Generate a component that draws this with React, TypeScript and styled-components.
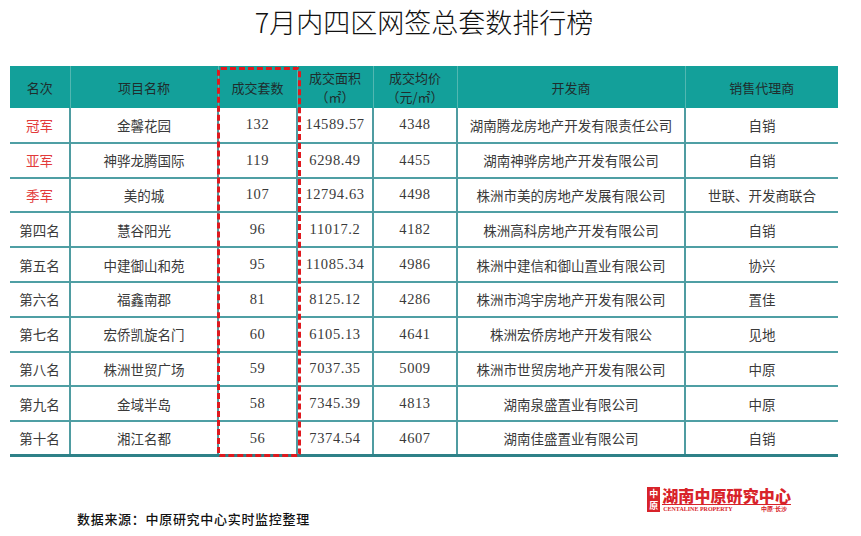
import styled, { createGlobalStyle } from "styled-components"

const GlobalStyle = createGlobalStyle`
  html, body {
    margin: 0;
    padding: 0;
    background: #ffffff;
  }
  body {
    font-family: "Noto Sans CJK SC", "Liberation Sans", sans-serif;
    color: #333333;
  }
`

const Page = styled.div`
  width: 861px;
  height: 536px;
  overflow: hidden;
`

const Sheet = styled.div`
  width: 828px;
  margin-left: 10px;
`

const Title = styled.h1`
  margin: 0;
  height: 66px;
  padding-top: 5px;
  box-sizing: border-box;
  text-align: center;
  font-size: 27px;
  line-height: 34px;
  font-weight: 300;
  color: #111111;
  font-family: "Noto Sans CJK SC", "Liberation Serif", serif;
`

const TableWrap = styled.div`
  position: relative;
`

const Table = styled.table`
  width: 828px;
  border-collapse: collapse;
  table-layout: fixed;
  border-bottom: 3px solid #2e8188;
`

const HeadCell = styled.th`
  height: 42px;
  padding: 0;
  background: #13a09a;
  color: #1f2d2d;
  font-weight: 400;
  font-size: 13px;
  line-height: 19px;
  text-align: center;
  border-left: 1px solid #52b7b1;

  &:first-child {
    border-left: none;
  }
`

const HeadLine = styled.div`
  white-space: nowrap;
`

const Row = styled.tr`
  height: 34.8px;
  border-top: 2px solid #4f9fa4;

  &:first-child {
    border-top: none;
  }
`

const Cell = styled.td<{ $red?: boolean; $num?: boolean }>`
  padding: 0;
  text-align: center;
  white-space: nowrap;
  font-size: ${(p) => (p.$num ? "14.5px" : "13.5px")};
  letter-spacing: ${(p) => (p.$num ? "0.6px" : "0")};
  font-family: ${(p) =>
    p.$num
      ? '"Liberation Serif", "Noto Sans CJK SC", serif'
      : '"Noto Sans CJK SC", "Liberation Sans", sans-serif'};
  color: ${(p) => (p.$red ? "#e23a3a" : "#3a3a3a")};
  border-left: 2px solid #4f9ca1;

  &:first-child {
    border-left: none;
  }
`

const DashedBox = styled.div`
  position: absolute;
  left: 207px;
  top: 1px;
  width: 84px;
  height: 390px;
  box-sizing: border-box;
  border: 3px dashed #e0191e;
  border-radius: 4px;
  pointer-events: none;
`

const Footer = styled.div`
  display: flex;
  align-items: flex-start;
`

const Note = styled.div`
  margin: 54px 0 0 77px;
  font-size: 13px;
  line-height: 16px;
  font-weight: 500;
  letter-spacing: 0.7px;
  color: #111111;
`

const Logo = styled.div`
  margin: 30px 70px 0 auto;
  display: flex;
  align-items: stretch;
  gap: 2px;
`

const LogoMark = styled.div`
  width: 13px;
  height: 25px;
  background: #d8232a;
  color: #ffffff;
  display: flex;
  flex-direction: column;
  align-items: center;
  justify-content: space-around;
  font-size: 9px;
  line-height: 10px;
  font-weight: 700;
`

const LogoText = styled.div`
  display: flex;
  flex-direction: column;
`

const LogoName = styled.div`
  font-size: 16px;
  line-height: 16px;
  font-weight: 900;
  color: #d8232a;
  letter-spacing: 0.1px;
  padding-bottom: 1px;
  border-bottom: 1px solid #d8232a;
`

const LogoSub = styled.div`
  display: flex;
  justify-content: space-between;
  padding: 1px 4px 0 1px;
  font-family: "Liberation Serif", "Noto Sans CJK SC", serif;
  font-size: 6px;
  line-height: 7px;
  font-weight: 700;
  color: #d8232a;
`

const headers = [
  { label: "名次", width: 60 },
  { label: "项目名称", width: 148 },
  { label: "成交套数", width: 79 },
  { label: "成交面积\n（㎡）", width: 76 },
  { label: "成交均价\n（元/㎡）", width: 84 },
  { label: "开发商", width: 228 },
  { label: "销售代理商", width: 153 },
]

const rows = [
  ["冠军", "金馨花园", "132", "14589.57", "4348", "湖南腾龙房地产开发有限责任公司", "自销"],
  ["亚军", "神骅龙腾国际", "119", "6298.49", "4455", "湖南神骅房地产开发有限公司", "自销"],
  ["季军", "美的城", "107", "12794.63", "4498", "株洲市美的房地产发展有限公司", "世联、开发商联合"],
  ["第四名", "慧谷阳光", "96", "11017.2", "4182", "株洲高科房地产开发有限公司", "自销"],
  ["第五名", "中建御山和苑", "95", "11085.34", "4986", "株洲中建信和御山置业有限公司", "协兴"],
  ["第六名", "福鑫南郡", "81", "8125.12", "4286", "株洲市鸿宇房地产开发有限公司", "置佳"],
  ["第七名", "宏侨凯旋名门", "60", "6105.13", "4641", "株洲宏侨房地产开发有限公", "见地"],
  ["第八名", "株洲世贸广场", "59", "7037.35", "5009", "株洲市世贸房地产开发有限公司", "中原"],
  ["第九名", "金域半岛", "58", "7345.39", "4813", "湖南泉盛置业有限公司", "中原"],
  ["第十名", "湘江名都", "56", "7374.54", "4607", "湖南佳盛置业有限公司", "自销"],
]

export default function App() {
  return (
    <Page>
      <GlobalStyle />
      <Sheet>
        <Title>7月内四区网签总套数排行榜</Title>
        <TableWrap>
          <Table>
            <colgroup>
              {headers.map((h) => (
                <col key={h.label} style={{ width: h.width }} />
              ))}
            </colgroup>
            <thead>
              <tr>
                {headers.map((h) => (
                  <HeadCell key={h.label}>
                    {h.label.split("\n").map((line, i) => (
                      <HeadLine key={i}>{line}</HeadLine>
                    ))}
                  </HeadCell>
                ))}
              </tr>
            </thead>
            <tbody>
              {rows.map((r, index) => (
                <Row key={r[0]}>
                  <Cell $red={index < 3}>{r[0]}</Cell>
                  <Cell>{r[1]}</Cell>
                  <Cell $num>{r[2]}</Cell>
                  <Cell $num>{r[3]}</Cell>
                  <Cell $num>{r[4]}</Cell>
                  <Cell>{r[5]}</Cell>
                  <Cell>{r[6]}</Cell>
                </Row>
              ))}
            </tbody>
          </Table>
          <DashedBox />
        </TableWrap>
      </Sheet>
      <Footer>
        <Note>数据来源：中原研究中心实时监控整理</Note>
        <Logo>
          <LogoMark>
            <span>中</span>
            <span>原</span>
          </LogoMark>
          <LogoText>
            <LogoName>湖南中原研究中心</LogoName>
            <LogoSub>
              <span>CENTALINE PROPERTY</span>
              <span>中原·长沙</span>
            </LogoSub>
          </LogoText>
        </Logo>
      </Footer>
    </Page>
  )
}
